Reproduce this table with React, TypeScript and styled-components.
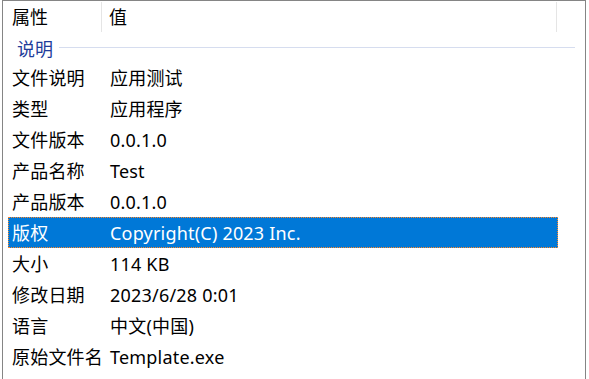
import React from 'react';
import styled, { createGlobalStyle } from 'styled-components';

const GlobalStyle = createGlobalStyle`
  html, body {
    margin: 0;
    padding: 0;
    background: #ffffff;
    overflow: hidden;
  }
  body {
    font-family: "Noto Sans", "Noto Sans CJK SC", sans-serif;
    font-size: 18px;
    color: #000;
  }
`;

const Page = styled.div`
  padding-left: 2px;
  width: 589px;
  height: 379px;
  box-sizing: border-box;
  overflow: hidden;
`;

const Frame = styled.div`
  width: 584px;
  height: 100%;
  box-sizing: border-box;
  border: 1px solid #858585;
  border-bottom: none;
  display: flex;
  flex-direction: column;
`;

const Header = styled.div`
  display: grid;
  grid-template-columns: 99px 455px 1fr;
  height: 32px;
  flex-shrink: 0;
`;

const HeaderCell = styled.div<{ $pad: number }>`
  display: flex;
  align-items: center;
  padding-left: ${(p) => p.$pad}px;
  border-right: 1px solid #e5e5e5;
  margin: 1px 0 1px;
  line-height: 1;
  &:last-child {
    border-right: none;
  }
`;

const Group = styled.div`
  display: flex;
  align-items: center;
  gap: 6px;
  height: 29px;
  flex-shrink: 0;
  padding-left: 14px;
  padding-right: 10px;
  color: #1e3c9a;
`;

const GroupLine = styled.div`
  flex: 1;
  height: 1px;
  background: #d6ddef;
`;

const Rows = styled.div`
  display: flex;
  flex-direction: column;
  padding-left: 5px;
`;

const Row = styled.div<{ $selected?: boolean }>`
  display: grid;
  grid-template-columns: 98px 1fr;
  align-items: center;
  width: 550px;
  height: 31px;
  flex-shrink: 0;
  box-sizing: border-box;
  background: ${(p) => (p.$selected ? '#0078d7' : 'transparent')};
  color: ${(p) => (p.$selected ? '#ffffff' : '#000000')};
  border: 1px ${(p) => (p.$selected ? 'dotted #ff8728' : 'solid transparent')};
`;

const Cell = styled.div`
  padding-left: 3px;
  white-space: nowrap;
  line-height: 1;
  letter-spacing: 0.2px;
`;

const rows: [string, string][] = [
  ['文件说明', '应用测试'],
  ['类型', '应用程序'],
  ['文件版本', '0.0.1.0'],
  ['产品名称', 'Test'],
  ['产品版本', '0.0.1.0'],
  ['版权', 'Copyright(C) 2023 Inc.'],
  ['大小', '114 KB'],
  ['修改日期', '2023/6/28 0:01'],
  ['语言', '中文(中国)'],
  ['原始文件名', 'Template.exe'],
];

const App: React.FC = () => {
  return (
    <Page>
      <GlobalStyle />
      <Frame>
        <Header>
          <HeaderCell $pad={9}>属性</HeaderCell>
          <HeaderCell $pad={7}>值</HeaderCell>
          <HeaderCell $pad={0} />
        </Header>
        <Group>
          说明
          <GroupLine />
        </Group>
        <Rows>
          {rows.map(([name, value]) => (
            <Row key={name} $selected={name === '版权'}>
              <Cell>{name}</Cell>
              <Cell>{value}</Cell>
            </Row>
          ))}
        </Rows>
      </Frame>
    </Page>
  );
};

export default App;
